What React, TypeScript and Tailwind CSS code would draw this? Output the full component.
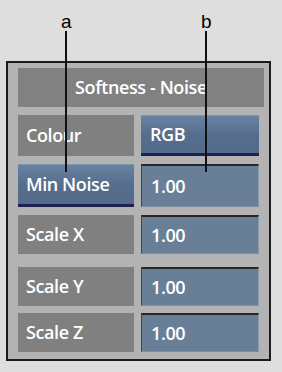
import React from 'react'

type Row = { label: string; value: string; active?: boolean; choice?: boolean; h: string; mt: string }

const rows: Row[] = [
  { label: 'Colour', value: 'RGB', choice: true, h: 'h-[41px]', mt: 'mt-[8px]' },
  { label: 'Min Noise', value: '1.00', active: true, h: 'h-[43px]', mt: 'mt-[8px]' },
  { label: 'Scale X', value: '1.00', h: 'h-[39px]', mt: 'mt-[8px]' },
  { label: 'Scale Y', value: '1.00', h: 'h-[39px]', mt: 'mt-[13px]' },
  { label: 'Scale Z', value: '1.00', h: 'h-[39px]', mt: 'mt-[7px]' },
]

const blueBtn =
  'bg-gradient-to-b from-[#6a83a3] via-[#566e8e] to-[#536a89] border-b-[3px] border-b-[#1e2150] border-t border-t-[#7d94b2]'

const txt = 'text-white text-[18px] font-semibold tracking-[-0.4px]'

export default function App() {
  return (
    <div
      className="relative w-[282px] h-[372px] bg-[#dedede] overflow-hidden"
      style={{ fontFamily: '"Open Sans", "DejaVu Sans", sans-serif' }}
    >
      {/* callout letters */}
      <div
        className="flex h-[61px] pt-[12px] text-[19px] leading-none text-black"
        style={{ fontFamily: '"Liberation Sans", Arial, sans-serif' }}
      >
        <span className="ml-[61px] w-[10px] text-center">a</span>
        <span className="ml-[130px] w-[10px] text-center">b</span>
      </div>

      <div className="pl-[6px]">
        <div className="w-[265px] h-[300px] border-2 border-[#1c1c1c] bg-[#b3b3b3] px-[10px] pt-[5px]">
          <div className={`h-[39px] w-[246px] bg-[#818181] flex items-center justify-center ${txt}`}>
            Softness - Noise
          </div>
          {rows.map((r) => (
            <div key={r.label} className={`flex gap-[7px] ${r.mt} ${r.h}`}>
              <div className={`w-[119px] flex items-center pl-[8px] ${txt} ${r.active ? blueBtn : 'bg-[#808080]'}`}>
                {r.label}
              </div>
              <div
                className={`w-[121px] flex items-center pl-[9px] ${txt} ${
                  r.choice
                    ? blueBtn
                    : 'bg-[#687f97] border-t-2 border-t-[#262626] border-l border-l-[#3e4652] border-r border-r-[#8a9aab] border-b border-b-[#7b8ea3]'
                }`}
              >
                {r.value}
              </div>
            </div>
          ))}
        </div>
      </div>

      {/* callout lines */}
      <div className="absolute left-[65px] top-[31px] w-[2px] h-[141px] bg-[#111]" />
      <div className="absolute left-[205px] top-[31px] w-[2px] h-[141px] bg-[#111]" />
    </div>
  )
}
